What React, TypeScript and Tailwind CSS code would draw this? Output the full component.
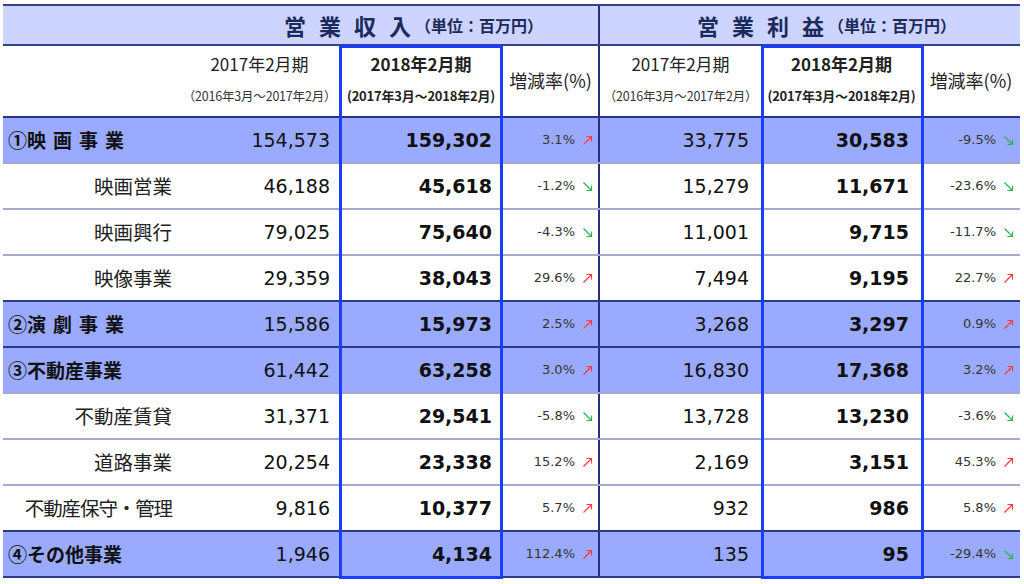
import React from "react";

type Row = {
  label: string;
  cat?: boolean;
  spaced?: boolean;
  r17: string;
  r18: string;
  rp: string;
  ru: boolean;
  p17: string;
  p18: string;
  pp: string;
  pu: boolean;
};

const rows: Row[] = [
  { label: "①映画事業", cat: true, spaced: true, r17: "154,573", r18: "159,302", rp: "3.1%", ru: true, p17: "33,775", p18: "30,583", pp: "-9.5%", pu: false },
  { label: "映画営業", r17: "46,188", r18: "45,618", rp: "-1.2%", ru: false, p17: "15,279", p18: "11,671", pp: "-23.6%", pu: false },
  { label: "映画興行", r17: "79,025", r18: "75,640", rp: "-4.3%", ru: false, p17: "11,001", p18: "9,715", pp: "-11.7%", pu: false },
  { label: "映像事業", r17: "29,359", r18: "38,043", rp: "29.6%", ru: true, p17: "7,494", p18: "9,195", pp: "22.7%", pu: true },
  { label: "②演劇事業", cat: true, spaced: true, r17: "15,586", r18: "15,973", rp: "2.5%", ru: true, p17: "3,268", p18: "3,297", pp: "0.9%", pu: true },
  { label: "③不動産事業", cat: true, r17: "61,442", r18: "63,258", rp: "3.0%", ru: true, p17: "16,830", p18: "17,368", pp: "3.2%", pu: true },
  { label: "不動産賃貸", r17: "31,371", r18: "29,541", rp: "-5.8%", ru: false, p17: "13,728", p18: "13,230", pp: "-3.6%", pu: false },
  { label: "道路事業", r17: "20,254", r18: "23,338", rp: "15.2%", ru: true, p17: "2,169", p18: "3,151", pp: "45.3%", pu: true },
  { label: "不動産保守・管理", r17: "9,816", r18: "10,377", rp: "5.7%", ru: true, p17: "932", p18: "986", pp: "5.8%", pu: true },
  { label: "④その他事業", cat: true, r17: "1,946", r18: "4,134", rp: "112.4%", ru: true, p17: "135", p18: "95", pp: "-29.4%", pu: false },
];

const jp = { fontFamily: '"Noto Sans CJK JP", "Noto Sans", sans-serif' };
const num = { fontFamily: '"DejaVu Sans", Verdana, sans-serif' };

function Arrow({ up }: { up: boolean }) {
  return up ? (
    <svg width="11" height="11" viewBox="0 0 11 11" className="ml-[7px] shrink-0">
      <path d="M1.5 9.5 L9.5 1.5 M4.5 1.5 H9.5 V6.5" fill="none" stroke="#ff3b3b" strokeWidth="1.2" />
    </svg>
  ) : (
    <svg width="11" height="11" viewBox="0 0 11 11" className="ml-[7px] shrink-0">
      <path d="M1.5 1.5 L9.5 9.5 M9.5 4.5 V9.5 H4.5" fill="none" stroke="#27b34e" strokeWidth="1.2" />
    </svg>
  );
}

function Pct({ v, up, pr }: { v: string; up: boolean; pr: string }) {
  return (
    <div className={`flex items-center justify-end ${pr}`}>
      <span className="text-[13px] text-[#333]" style={num}>
        {v}
      </span>
      <Arrow up={up} />
    </div>
  );
}

const grid = "grid grid-cols-[177px_159px_164px_95px_163px_161px_98px]";

function PrevHead({ border }: { border?: boolean }) {
  return (
    <div className={`flex flex-col items-center pt-[5px] ${border ? "border-l-2 border-[#2a3077]" : ""}`}>
      <span className="text-[17px] leading-[26px]">2017年2月期</span>
      <span className="text-[12.5px] leading-[20px] mt-[9px] text-[#333] tracking-[-0.2px]">（2016年3月～2017年2月）</span>
    </div>
  );
}

function CurHead() {
  return (
    <div className="flex flex-col items-center pt-[5px]">
      <span className="text-[17px] font-bold leading-[26px]">2018年2月期</span>
      <span className="text-[13px] font-bold leading-[20px] mt-[9px] tracking-[-0.2px]">(2017年3月～2018年2月)</span>
    </div>
  );
}

export default function App() {
  return (
    <div className="w-[1024px] h-[584px] bg-white overflow-hidden">
      <div className="relative ml-[3px] mt-[4px] w-[1017px]">
        {/* Header row 1 */}
        <div className="flex h-[42px] border-t-2 border-b-2 border-[#34428f] bg-[#ccd4ff]">
          <div className="w-[595px] flex items-center pl-[280px] border-l border-[#d6d9e6]">
            <span className="text-[22px] font-bold text-[#1b2a5c] tracking-[13px]" style={jp}>
              営業収入
            </span>
            <span className="text-[16px] font-bold text-[#1b2a5c] ml-[-9px]" style={jp}>
              （単位：百万円）
            </span>
          </div>
          <div className="w-[422px] flex items-center pl-[97px] border-l-2 border-[#2a3077]">
            <span className="text-[22px] font-bold text-[#1b2a5c] tracking-[13px]" style={jp}>
              営業利益
            </span>
            <span className="text-[16px] font-bold text-[#1b2a5c] ml-[-9px]" style={jp}>
              （単位：百万円）
            </span>
          </div>
        </div>

        {/* Header row 2 */}
        <div className={`${grid} h-[72px] border-b-2 border-[#2a3580] bg-white text-[#222]`} style={jp}>
          <div></div>
          <PrevHead />
          <CurHead />
          <div className="flex items-center justify-center pb-[2px]">
            <span className="text-[18px]">増減率(%)</span>
          </div>
          <PrevHead border />
          <CurHead />
          <div className="flex items-center justify-center pb-[2px]">
            <span className="text-[18px]">増減率(%)</span>
          </div>
        </div>

        {/* Data rows */}
        {rows.map((r, i) => {
          const next = rows[i + 1];
          const dark = !next || next.cat;
          const long = r.label.length > 6;
          return (
            <div
              key={i}
              className={`${grid} h-[46px] border-b-2 ${dark ? "border-[#2f3a86]" : "border-[#a3aad2]"} ${
                r.cat ? "bg-[#9aabff]" : "bg-white"
              } text-[#111]`}
            >
              {r.cat ? (
                <div className="flex items-center pl-[5px] text-[19px] font-bold text-[#111]" style={jp}>
                  {r.spaced ? (
                    <>
                      <span>{r.label.slice(0, 1)}</span>
                      <span className="tracking-[7px]">{r.label.slice(1)}</span>
                    </>
                  ) : (
                    <span>{r.label}</span>
                  )}
                </div>
              ) : (
                <div
                  className={`flex items-center justify-end pr-[8px] text-[19.5px] text-[#222] ${
                    long ? "tracking-[-1.1px]" : ""
                  }`}
                  style={jp}
                >
                  {r.label}
                </div>
              )}
              <div className="flex items-center justify-end pr-[9px] text-[19px]" style={num}>
                {r.r17}
              </div>
              <div className="flex items-center justify-end pr-[11px] text-[19px] font-bold" style={num}>
                {r.r18}
              </div>
              <Pct v={r.rp} up={r.ru} pr="pr-[5px]" />
              <div className="flex items-center justify-end pr-[12px] text-[19px] border-l-2 border-[#2a3077]" style={num}>
                {r.p17}
              </div>
              <div className="flex items-center justify-end pr-[13px] text-[19px] font-bold" style={num}>
                {r.p18}
              </div>
              <Pct v={r.pp} up={r.pu} pr="pr-[6px]" />
            </div>
          );
        })}

        {/* Highlight frames over the 2018 columns */}
        <div className="pointer-events-none absolute left-[336px] top-[41px] w-[164px] h-[534px] border-[3px] border-[#1a3dff]"></div>
        <div className="pointer-events-none absolute left-[758px] top-[41px] w-[163px] h-[534px] border-[3px] border-[#1a3dff]"></div>
      </div>
    </div>
  );
}
